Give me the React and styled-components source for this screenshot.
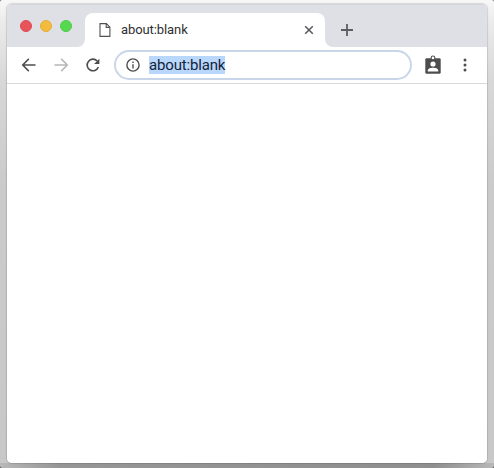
import React from "react";
import styled, { createGlobalStyle } from "styled-components";

const GlobalStyle = createGlobalStyle`
  * { box-sizing: border-box; }
  body { margin: 0; overflow: hidden; font-family: Roboto, "Liberation Sans", sans-serif; }
  svg { display: block; flex: none; }
`;

const Desktop = styled.div`
  width: 494px;
  height: 468px;
  padding: 4px 7px 5px;
  background:
    radial-gradient(circle at 0 0, #666 0, transparent 2px),
    radial-gradient(circle at 100% 0, #666 0, transparent 2px),
    radial-gradient(circle at 0 100%, #444 0, transparent 2px),
    radial-gradient(circle at 100% 100%, #444 0, transparent 2px),
    linear-gradient(90deg, #b8b8b8 0, #969696 60px, #8f8f8f 434px, #b8b8b8 494px) 0 463px / 494px 5px no-repeat,
    linear-gradient(180deg, #f8f8f8 0, #ececec 20px, #d8d8d8 80px, #cbcbcb 180px, #c8c8c8 100%);
`;

const BrowserWindow = styled.div`
  height: 459px;
  display: flex;
  flex-direction: column;
  overflow: hidden;
  border-radius: 5px;
  background: #fff;
  box-shadow: 0 0 1px 1px rgba(0, 0, 0, 0.13);
`;

const TabStrip = styled.header`
  height: 43px;
  flex: none;
  display: flex;
  align-items: flex-end;
  background: linear-gradient(#dfe0e5 26px, #fff 26px);
  border-top: 1px solid #d5d6da;
`;

const TrafficLights = styled.div`
  width: 78px;
  height: 42px;
  display: flex;
  align-items: center;
  gap: 8px;
  padding: 0 0 0 13px;
  background: #dfe0e5;
  border-bottom-right-radius: 8px;
`;

const Light = styled.span`
  width: 12px;
  height: 12px;
  border-radius: 50%;
  background: ${(p) => p.$color};
  border: 1px solid ${(p) => p.$edge};
`;

const TabArea = styled.div`
  display: flex;
  height: 34px;
  flex: 1;
`;

const Tab = styled.div`
  width: 240px;
  display: flex;
  align-items: center;
  padding: 0 11px 0 14px;
  background: #fff;
  border-radius: 8px 8px 0 0;
`;

const TabTitle = styled.span`
  flex: 1;
  margin-left: 10px;
  font-size: 13px;
  line-height: 18px;
  letter-spacing: -0.09px;
  color: #2e2f31;
`;

const StripEnd = styled.div`
  flex: 1;
  display: flex;
  align-items: center;
  padding-left: 16px;
  background: #dfe0e5;
  border-bottom-left-radius: 8px;
`;

const Toolbar = styled.nav`
  height: 37px;
  flex: none;
  display: flex;
  align-items: center;
  padding: 0 12px;
  border-bottom: 1px solid #d8d8da;
`;

const ToolButton = styled.span`
  width: 20px;
  height: 20px;
  flex: none;
  display: grid;
  place-items: center;
  margin-right: ${(p) => p.$gap || 0}px;
  color: ${(p) => (p.$muted ? "#b6b7b8" : "#4c4d4f")};
`;

const AddressBar = styled.div`
  width: 298px;
  height: 30px;
  flex: none;
  display: flex;
  align-items: center;
  margin-right: 11px;
  padding-left: 10px;
  border: 2px solid #c9d6e9;
  border-radius: 15px;
  color: #4c4d4f;
`;

const SelectedText = styled.span`
  width: 76px;
  height: 18px;
  margin-left: 9px;
  background: #b8d7fb;
  color: #14233b;
  font-size: 15px;
  letter-spacing: -0.17px;
  line-height: 18px;
  white-space: nowrap;
`;

const PageView = styled.main`
  flex: 1;
  background: #fff;
`;

const lights = [
  { color: "#e8545a", edge: "#dc4b51" },
  { color: "#f3bc3e", edge: "#e3ad35" },
  { color: "#57d94f", edge: "#4dca47" },
];

const BackIcon = () => (
  <svg width="20" height="20" viewBox="0 0 20 20" fill="none" stroke="currentColor" strokeWidth="1.5">
    <path d="M16.5 10H4M9.8 3.9L3.7 10L9.8 16.1" />
  </svg>
);

const ForwardIcon = () => (
  <svg width="20" height="20" viewBox="0 0 20 20" fill="none" stroke="currentColor" strokeWidth="1.5">
    <path d="M3.5 10H16M10.2 3.9L16.3 10L10.2 16.1" />
  </svg>
);

const ReloadIcon = () => (
  <svg width="20" height="20" viewBox="0 0 20 20" fill="none" stroke="currentColor" strokeWidth="1.6">
    <path d="M15.4 12A5.8 5.8 0 1 1 14.2 6" />
    <path d="M16.4 3.7V9H11.1Z" fill="currentColor" stroke="none" />
  </svg>
);

const InfoIcon = () => (
  <svg width="14" height="14" viewBox="0 0 14 14" fill="none" stroke="currentColor" strokeWidth="1.4">
    <circle cx="7" cy="7" r="6.1" />
    <path d="M7 6.2V10.4M7 3.6V5" />
  </svg>
);

const BadgeIcon = () => (
  <svg width="20" height="20" viewBox="0 0 20 20">
    <rect x="2.3" y="3.2" width="15.4" height="15.6" rx="1.4" fill="#4c4d4f" />
    <circle cx="10" cy="2.9" r="1.9" fill="#fff" stroke="#4c4d4f" strokeWidth="1.1" />
    <circle cx="10" cy="9" r="2.6" fill="#fff" />
    <path d="M4.8 16.4V15.3C4.8 13.6 7.8 12.8 10 12.8S15.2 13.6 15.2 15.3V16.4Z" fill="#fff" />
  </svg>
);

const MenuIcon = () => (
  <svg width="20" height="20" viewBox="0 0 20 20" fill="currentColor">
    <circle cx="10" cy="5" r="1.5" />
    <circle cx="10" cy="10" r="1.5" />
    <circle cx="10" cy="15" r="1.5" />
  </svg>
);

export default function App() {
  return (
    <>
      <GlobalStyle />
      <Desktop>
        <BrowserWindow>
          <TabStrip>
            <TrafficLights>
              {lights.map((l) => <Light key={l.color} $color={l.color} $edge={l.edge} />)}
            </TrafficLights>
            <TabArea>
              <Tab>
                <svg width="12" height="14" viewBox="0 0 12 14" fill="none" stroke="#505153" strokeWidth="1.1">
                  <path d="M1 .6H7.4L10.9 4.2V13.4H1ZM7.2 .8V4.4H10.8" />
                </svg>
                <TabTitle>about:blank</TabTitle>
                <svg width="10" height="10" viewBox="0 0 10 10" stroke="#56575a" strokeWidth="1.5">
                  <path d="M1.2 1.2L8.8 8.8M8.8 1.2L1.2 8.8" />
                </svg>
              </Tab>
              <StripEnd>
                <svg width="12" height="12" viewBox="0 0 12 12" stroke="#5b5d61" strokeWidth="1.8">
                  <path d="M6 0V12M0 6H12" />
                </svg>
              </StripEnd>
            </TabArea>
          </TabStrip>
          <Toolbar>
            <ToolButton $gap={12}><BackIcon /></ToolButton>
            <ToolButton $gap={12} $muted><ForwardIcon /></ToolButton>
            <ToolButton $gap={11}><ReloadIcon /></ToolButton>
            <AddressBar>
              <InfoIcon />
              <SelectedText>about:blank</SelectedText>
            </AddressBar>
            <ToolButton $gap={12}><BadgeIcon /></ToolButton>
            <ToolButton><MenuIcon /></ToolButton>
          </Toolbar>
          <PageView />
        </BrowserWindow>
      </Desktop>
    </>
  );
}
